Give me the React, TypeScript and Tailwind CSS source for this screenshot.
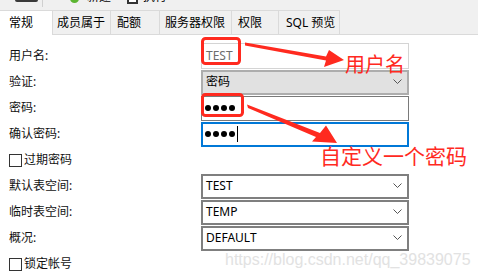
import React from "react";

const font = { fontFamily: '"Noto Sans", "Noto Sans CJK SC", sans-serif' };

const Chevron = () => (
  <svg width="9" height="6" viewBox="0 0 9 6" className="shrink-0">
    <polyline points="0.5,0.5 4.5,4.5 8.5,0.5" fill="none" stroke="#555" strokeWidth="1" />
  </svg>
);

const Dots = () => (
  <div className="flex gap-[2px]">
    {[0, 1, 2, 3].map((i) => (
      <span key={i} className="block h-[6px] w-[6px] rounded-full bg-black" />
    ))}
  </div>
);

const Row = ({ label, children }: { label: string; children: React.ReactNode }) => (
  <div className="flex h-[26px] items-center">
    <div className="w-[201px] pl-[9px] text-[12px] text-[#111]">{label}</div>
    <div className="w-[208px]">{children}</div>
  </div>
);

const Select = ({ value }: { value: string }) => (
  <div className="flex h-[25px] items-center justify-between border-2 border-[#7f7f7f] bg-white pl-[3px] pr-[5px] text-[12px] text-black">
    <span>{value}</span>
    <Chevron />
  </div>
);

const Check = ({ label }: { label: string }) => (
  <div className="flex h-[26px] items-center pl-[9px] text-[12px] text-[#111]">
    <span className="mr-[2px] block h-[13px] w-[13px] border border-[#333] bg-white" />
    {label}
  </div>
);

const tabs = [
  { name: "常规", w: "w-[53px] pl-[9px]", active: true },
  { name: "成员属于", w: "w-[58px] pl-[4px]" },
  { name: "配额", w: "w-[49px] pl-[6px]" },
  { name: "服务器权限", w: "w-[72px] pl-[5px]" },
  { name: "权限", w: "w-[47px] pl-[6px]" },
  { name: "SQL 预览", w: "w-[61px] pl-[7px]" },
];

export default function App() {
  return (
    <div className="relative h-[279px] w-[478px] overflow-hidden bg-white" style={font}>
      {/* toolbar, mostly cut off at the top */}
      <div className="flex h-[10px] items-end overflow-hidden bg-[#f0f0f0]">
        <span className="mb-[8px] ml-[15px] block h-[14px] w-[23px] rounded-[2px] bg-[#3a3a3a]" />
        <span className="mb-[3px] ml-[4px] block h-[12px] w-px bg-[#d0d0d0]" />
        <span className="mb-[7px] ml-[27px] block h-[12px] w-[9px] rounded-full bg-[#5cb531]" />
        <span className="mb-[5px] ml-[8px] text-[12px] leading-[16px] text-black">新建</span>
        <span className="mb-[6px] ml-[16px] block h-[12px] w-[11px] border-2 border-[#333] bg-white" />
        <span className="mb-[5px] ml-[5px] text-[12px] leading-[16px] text-black">执行</span>
      </div>

      {/* tabs */}
      <div className="flex h-[25px] items-start border-b border-[#dadada] bg-[#f0f0f0]">
        {tabs.map((t) => (
          <div
            key={t.name}
            className={`${t.w} flex items-center border-r border-t border-[#dadada] text-[12px] text-black ${
              t.active ? "h-[25px] bg-white" : "h-[24px] bg-[#f0f0f0]"
            }`}
          >
            {t.name}
          </div>
        ))}
      </div>

      {/* form */}
      <div className="flex flex-col pt-[8px]">
        <Row label="用户名:">
          <div className="flex h-[26px] items-center border border-[#d4d4d4] bg-white pl-[4px] text-[12px] text-[#6d6d6d]">
            TEST
          </div>
        </Row>
        <Row label="验证:">
          <div className="flex h-[25px] items-center justify-between border-2 border-[#adadad] bg-[#e1e1e1] pl-[3px] pr-[5px] text-[12px] text-black">
            <span>密码</span>
            <Chevron />
          </div>
        </Row>
        <Row label="密码:">
          <div className="flex h-[25px] items-center border border-[#7a7a7a] bg-white pl-[3px]">
            <Dots />
          </div>
        </Row>
        <Row label="确认密码:">
          <div className="flex h-[25px] items-center border-2 border-[#0078d7] bg-white pl-[2px]">
            <Dots />
            <span className="ml-[2px] block h-[16px] w-px bg-black" />
          </div>
        </Row>
        <Check label="过期密码" />
        <Row label="默认表空间:">
          <Select value="TEST" />
        </Row>
        <Row label="临时表空间:">
          <Select value="TEMP" />
        </Row>
        <Row label="概况:">
          <Select value="DEFAULT" />
        </Row>
        <Check label="锁定帐号" />
      </div>

      {/* watermark */}
      <div
        className="absolute left-[225px] top-[251px] text-[16px] leading-[18px] text-[#e2e2e2]"
        style={{ fontFamily: '"Liberation Sans", Arial, sans-serif' }}
      >
        https://blog.csdn.net/qq_39839075
      </div>

      {/* annotations */}
      <svg className="absolute left-0 top-0" width="478" height="279" viewBox="0 0 478 279">
        <rect x="202.5" y="38.5" width="37" height="25" rx="3" fill="none" stroke="#ff2a1f" strokeWidth="3" />
        <rect x="202.5" y="94.5" width="40" height="21" rx="3" fill="none" stroke="#ff2a1f" strokeWidth="3" />
        <polygon
          points="245,42.5 245,45.5 326,60.5 324,67 344,60 329,50 326,56.5"
          fill="#ff2a1f"
        />
        <polygon
          points="247,104.5 248,108 316,137 312,141.5 337,143 326,125.5 320,133"
          fill="#ff2a1f"
        />
      </svg>
      <div className="absolute left-[345px] top-[54px] text-[20px] leading-[21px] text-[#ff2a1f]">用户名</div>
      <div className="absolute left-[320px] top-[145px] text-[21px] leading-[22px] text-[#ff2a1f]">
        自定义一个密码
      </div>
    </div>
  );
}
